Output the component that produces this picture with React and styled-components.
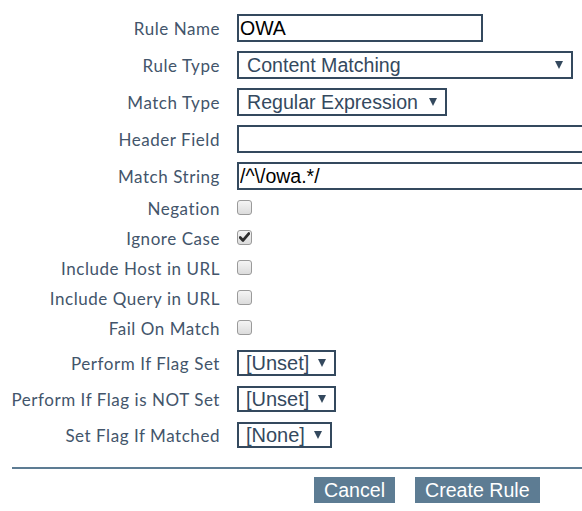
import React from "react";
import styled, { createGlobalStyle } from "styled-components";

const Global = createGlobalStyle`
  html, body { margin: 0; padding: 0; background: #fff; }
  body { font-family: Lato, "Open Sans", sans-serif; }
`;

const Page = styled.div`
  width: 582px;
  height: 511px;
  overflow: hidden;
  padding-top: 14px;
  box-sizing: border-box;
`;

const Form = styled.div`
  display: flex;
  flex-direction: column;
`;

const Row = styled.div`
  display: flex;
  align-items: center;
  height: ${(p) => p.$h}px;
  margin-top: ${(p) => p.$mt || 0}px;
`;

const Label = styled.label`
  width: 220px;
  flex-shrink: 0;
  margin-right: 17px;
  text-align: right;
  font-family: Lato, "Open Sans", sans-serif;
  font-size: 17px;
  letter-spacing: 0.55px;
  color: #43556b;
  white-space: nowrap;
  margin-top: ${(p) => p.$dy || 0}px;
`;

const TextInput = styled.input`
  box-sizing: border-box;
  height: 100%;
  width: ${(p) => p.$w}px;
  flex-shrink: 0;
  border: 2px solid #34495e;
  border-radius: 0;
  padding: 0 1px;
  margin: 0;
  font-family: "Liberation Sans", Arial, sans-serif;
  font-size: 19.5px;
  color: #000;
  outline: none;
  background: #fff;
`;

const SelectBox = styled.div`
  box-sizing: border-box;
  height: 100%;
  display: inline-flex;
  align-items: center;
  gap: ${(p) => p.$gap}px;
  width: ${(p) => (p.$w ? `${p.$w}px` : "auto")};
  border: 2px solid #34495e;
  padding: 0 8px 0 ${(p) => p.$pl}px;
  font-family: "Liberation Sans", Arial, sans-serif;
  font-size: ${(p) => p.$fs}px;
  color: #34495e;
  background: #fff;
`;

const SelectValue = styled.span`
  flex: ${(p) => (p.$grow ? 1 : "none")};
  white-space: nowrap;
`;

const Arrow = styled.span`
  width: 0;
  height: 0;
  border-left: 4.5px solid transparent;
  border-right: 4.5px solid transparent;
  border-top: 8px solid #34495e;
  flex-shrink: 0;
`;

const Check = styled.span`
  box-sizing: border-box;
  width: 15px;
  height: 15px;
  border: 1px solid #9a9a9a;
  border-radius: 3px;
  background: linear-gradient(#f4f4f4, #dcdcdc);
  display: inline-flex;
  align-items: center;
  justify-content: center;
`;

const Divider = styled.hr`
  margin: 19px 0 0 12px;
  border: none;
  height: 2px;
  background: #5d7c93;
`;

const Buttons = styled.div`
  display: flex;
  gap: 20px;
  margin-top: 8px;
  padding-left: 314px;
`;

const Button = styled.button`
  height: 26px;
  padding: 0 10px;
  border: none;
  border-radius: 0;
  background: #5d7c93;
  color: #fff;
  font-family: "Liberation Sans", Arial, sans-serif;
  font-size: 19.6px;
  line-height: 26px;
  cursor: pointer;
`;

function Select({ value, w, fs = 19.6, pl = 8, gap = 11 }) {
  return (
    <SelectBox $w={w} $fs={fs} $pl={pl} $gap={gap}>
      <SelectValue $grow={!!w}>{value}</SelectValue>
      <Arrow />
    </SelectBox>
  );
}

function CheckBox({ checked }) {
  return (
    <Check>
      {checked && (
        <svg width="11" height="10" viewBox="0 0 11 10">
          <path d="M1.2 5.6 L4 8.4 L9.8 1.6" fill="none" stroke="#2d2d2d" strokeWidth="2.8" strokeLinecap="round" strokeLinejoin="round" />
        </svg>
      )}
    </Check>
  );
}

const checks = [
  ["Negation", false],
  ["Ignore Case", true],
  ["Include Host in URL", false],
  ["Include Query in URL", false],
  ["Fail On Match", false],
];

export default function App() {
  return (
    <Page>
      <Global />
      <Form>
        <Row $h={28}>
          <Label>Rule Name</Label>
          <TextInput $w={246} defaultValue="OWA" />
        </Row>
        <Row $h={28} $mt={9}>
          <Label>Rule Type</Label>
          <Select value="Content Matching" w={336} />
        </Row>
        <Row $h={28} $mt={9}>
          <Label>Match Type</Label>
          <Select value="Regular Expression" />
        </Row>
        <Row $h={28} $mt={9}>
          <Label>Header Field</Label>
          <TextInput $w={400} defaultValue="" />
        </Row>
        <Row $h={28} $mt={9}>
          <Label>Match String</Label>
          <TextInput $w={400} defaultValue="/^\/owa.*/" />
        </Row>
        {checks.map(([label, checked], i) => (
          <Row key={label} $h={30} $mt={i === 0 ? 2 : 0}>
            <Label $dy={3}>{label}</Label>
            <CheckBox checked={checked} />
          </Row>
        ))}
        <Row $h={26} $mt={8}>
          <Label>Perform If Flag Set</Label>
          <Select value="[Unset]" fs={20} pl={7} gap={9} />
        </Row>
        <Row $h={26} $mt={10}>
          <Label>Perform If Flag is NOT Set</Label>
          <Select value="[Unset]" fs={20} pl={7} gap={9} />
        </Row>
        <Row $h={26} $mt={10}>
          <Label>Set Flag If Matched</Label>
          <Select value="[None]" fs={20} pl={7} gap={9} />
        </Row>
      </Form>
      <Divider />
      <Buttons>
        <Button>Cancel</Button>
        <Button>Create Rule</Button>
      </Buttons>
    </Page>
  );
}
